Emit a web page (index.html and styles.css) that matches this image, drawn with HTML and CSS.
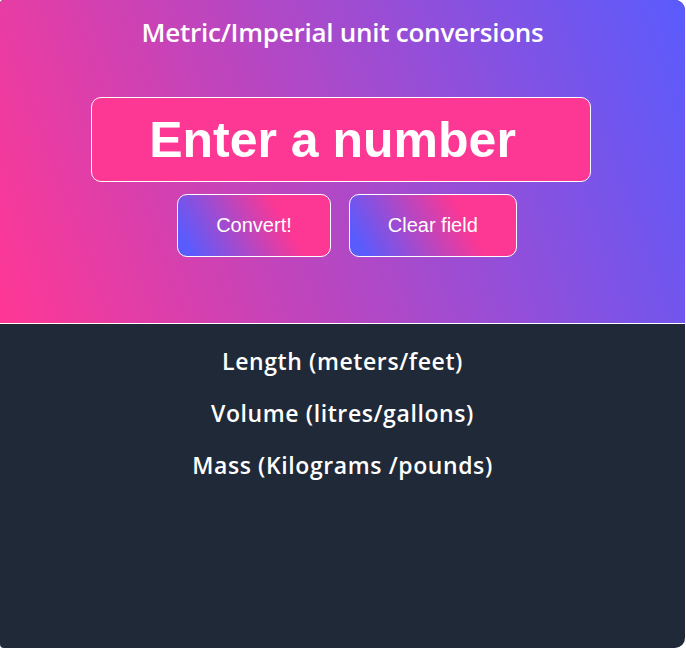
FILE: index.html
```html
<!DOCTYPE html>
<html>
<head>
<meta charset="utf-8">
<link rel="stylesheet" href="styles.css">
</head>
<body>
<main class="card">
  <section class="top">
    <h1 class="title">Metric/Imperial unit conversions</h1>
    <input class="num" type="text" placeholder="Enter a number">
    <div class="actions">
      <button class="btn">Convert!</button>
      <button class="btn">Clear field</button>
    </div>
  </section>
  <section class="bottom">
    <p class="row">Length (meters/feet)</p>
    <p class="row">Volume (litres/gallons)</p>
    <p class="row">Mass (Kilograms /pounds)</p>
  </section>
</main>
</body>
</html>
```
FILE: styles.css
```css
html, body {
  margin: 0;
  padding: 0;
  background: #ffffff;
}
.card {
  width: 685px;
  height: 648px;
  border-radius: 4px 10px 10px 4px;
  overflow: hidden;
  background: #1f2937;
  display: flex;
  flex-direction: column;
}
.top {
  box-sizing: border-box;
  height: 324px;
  border-bottom: 1px solid #ffffff;
  background: linear-gradient(70deg, #ff3794 0%, #5a5bfd 100%);
  display: flex;
  flex-direction: column;
  align-items: center;
}
.title {
  margin: 15px 0 0;
  font-family: "Open Sans", sans-serif;
  font-weight: 600;
  font-size: 26px;
  line-height: 34px;
  color: #ffffff;
  letter-spacing: -0.25px;
}
.num {
  margin: 48px 4px 0 0;
  width: 500px;
  height: 85px;
  box-sizing: border-box;
  border: 1px solid #ffffff;
  border-radius: 10px;
  background: #fc3794;
  color: #ffffff;
  font-family: "Liberation Sans", Arial, sans-serif;
  font-weight: 700;
  font-size: 50px;
  text-align: center;
  padding: 0 16px 0 0;
  outline: none;
}
.num::placeholder {
  color: #ffffff;
  opacity: 1;
}
.actions {
  margin-top: 12px;
  padding-left: 9px;
  display: flex;
  gap: 18px;
}
.btn {
  height: 63px;
  padding: 0 38px;
  border: 1px solid #ffffff;
  border-radius: 10px;
  background: linear-gradient(60deg, #5a5bfd 8%, #fc3794 68%);
  color: #ffffff;
  font-family: "Liberation Sans", Arial, sans-serif;
  font-size: 20px;
}
.bottom {
  flex: 1;
  display: flex;
  flex-direction: column;
  align-items: center;
  padding-top: 23px;
}
.row {
  margin: 0 0 23px;
  font-family: "Open Sans", sans-serif;
  font-weight: 600;
  font-size: 23px;
  line-height: 29px;
  letter-spacing: 0.6px;
  color: #ffffff;
}
```
